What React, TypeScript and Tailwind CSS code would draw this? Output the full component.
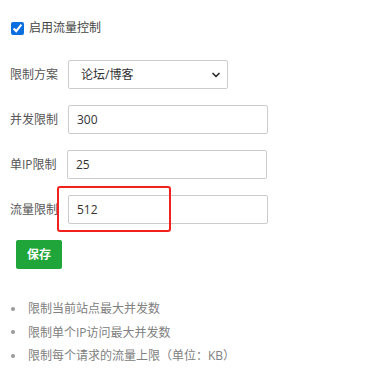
import React, { useState } from 'react';
import { ChevronDown } from 'lucide-react';

const font = { fontFamily: '"Open Sans", "Noto Sans CJK SC", sans-serif' };

const Row: React.FC<{ label: string; children: React.ReactNode; className?: string }> = ({ label, children, className }) => (
  <div className={`relative flex items-center h-[29px] ${className ?? ''}`}>
    <label className="w-[58px] shrink-0 text-[12px] text-[#555] whitespace-nowrap">{label}</label>
    {children}
  </div>
);

export default function App() {
  const [enabled, setEnabled] = useState(true);
  const [form, setForm] = useState({ plan: 'bbs', perserver: '300', perip: '25', limit_rate: '512' });

  const handleChange = (e: React.ChangeEvent<HTMLInputElement | HTMLSelectElement>) => {
    setForm({ ...form, [e.target.name]: e.target.value });
  };

  return (
    <div className="min-h-screen bg-white pl-[10px] pt-[21px]" style={font}>
      {/* enable switch */}
      <label className="flex items-center gap-[5px] pl-[1px] h-[14px] text-[12px] text-[#444]">
        <input
          type="checkbox"
          checked={enabled}
          onChange={(e) => setEnabled(e.target.checked)}
          className="m-0 w-[13px] h-[13px] accent-[#0b6fe0]"
        />
        启用流量控制
      </label>

      <div className="mt-[25px] flex flex-col gap-[16px]">
        <Row label="限制方案">
          <div className="relative w-[160px]">
            <select
              name="plan"
              value={form.plan}
              onChange={handleChange}
              className="appearance-none w-full h-[29px] border border-[#ccc] rounded-[2px] bg-white pl-[12px] text-[12px] text-[#333] outline-none"
            >
              <option value="bbs">论坛/博客</option>
              <option value="pic">图片站</option>
              <option value="down">下载站</option>
            </select>
            <ChevronDown size={12} strokeWidth={3.5} className="absolute right-[6px] top-[9px] text-[#333] pointer-events-none" />
          </div>
        </Row>
        <Row label="并发限制">
          <input
            name="perserver"
            value={form.perserver}
            onChange={handleChange}
            className="w-[200px] h-[29px] border border-[#ccc] rounded-[2px] px-[8px] text-[12px] text-[#333] outline-none"
          />
        </Row>
        <Row label="单IP限制">
          <input
            name="perip"
            value={form.perip}
            onChange={handleChange}
            className="-ml-[1px] w-[200px] h-[29px] border border-[#ccc] rounded-[2px] px-[8px] text-[12px] text-[#333] outline-none"
          />
        </Row>
        <Row label="流量限制">
          <input
            name="limit_rate"
            value={form.limit_rate}
            onChange={handleChange}
            className="w-[200px] h-[29px] border border-[#ccc] rounded-[2px] px-[8px] text-[12px] text-[#333] outline-none"
          />
          {/* highlight annotation */}
          <div className="absolute left-[47px] top-[-9px] w-[114px] h-[46px] border-2 border-[#f3211d] rounded-[3px] pointer-events-none" />
        </Row>
      </div>

      <button className="mt-[16px] ml-[6px] w-[46px] h-[29px] rounded-[2px] bg-[#20a53a] text-white text-[12px] font-bold">
        保存
      </button>

      <ul className="mt-[28px] text-[12px] text-[#808080] leading-[23.5px]">
        <li className="flex items-center">
          <span className="w-[4px] h-[4px] rounded-full bg-[#999] ml-[1px] mr-[13px]" />
          限制当前站点最大并发数
        </li>
        <li className="flex items-center">
          <span className="w-[4px] h-[4px] rounded-full bg-[#999] ml-[1px] mr-[13px]" />
          限制单个IP访问最大并发数
        </li>
        <li className="flex items-center">
          <span className="w-[4px] h-[4px] rounded-full bg-[#999] ml-[1px] mr-[13px]" />
          限制每个请求的流量上限（单位：KB）
        </li>
      </ul>
    </div>
  );
}
